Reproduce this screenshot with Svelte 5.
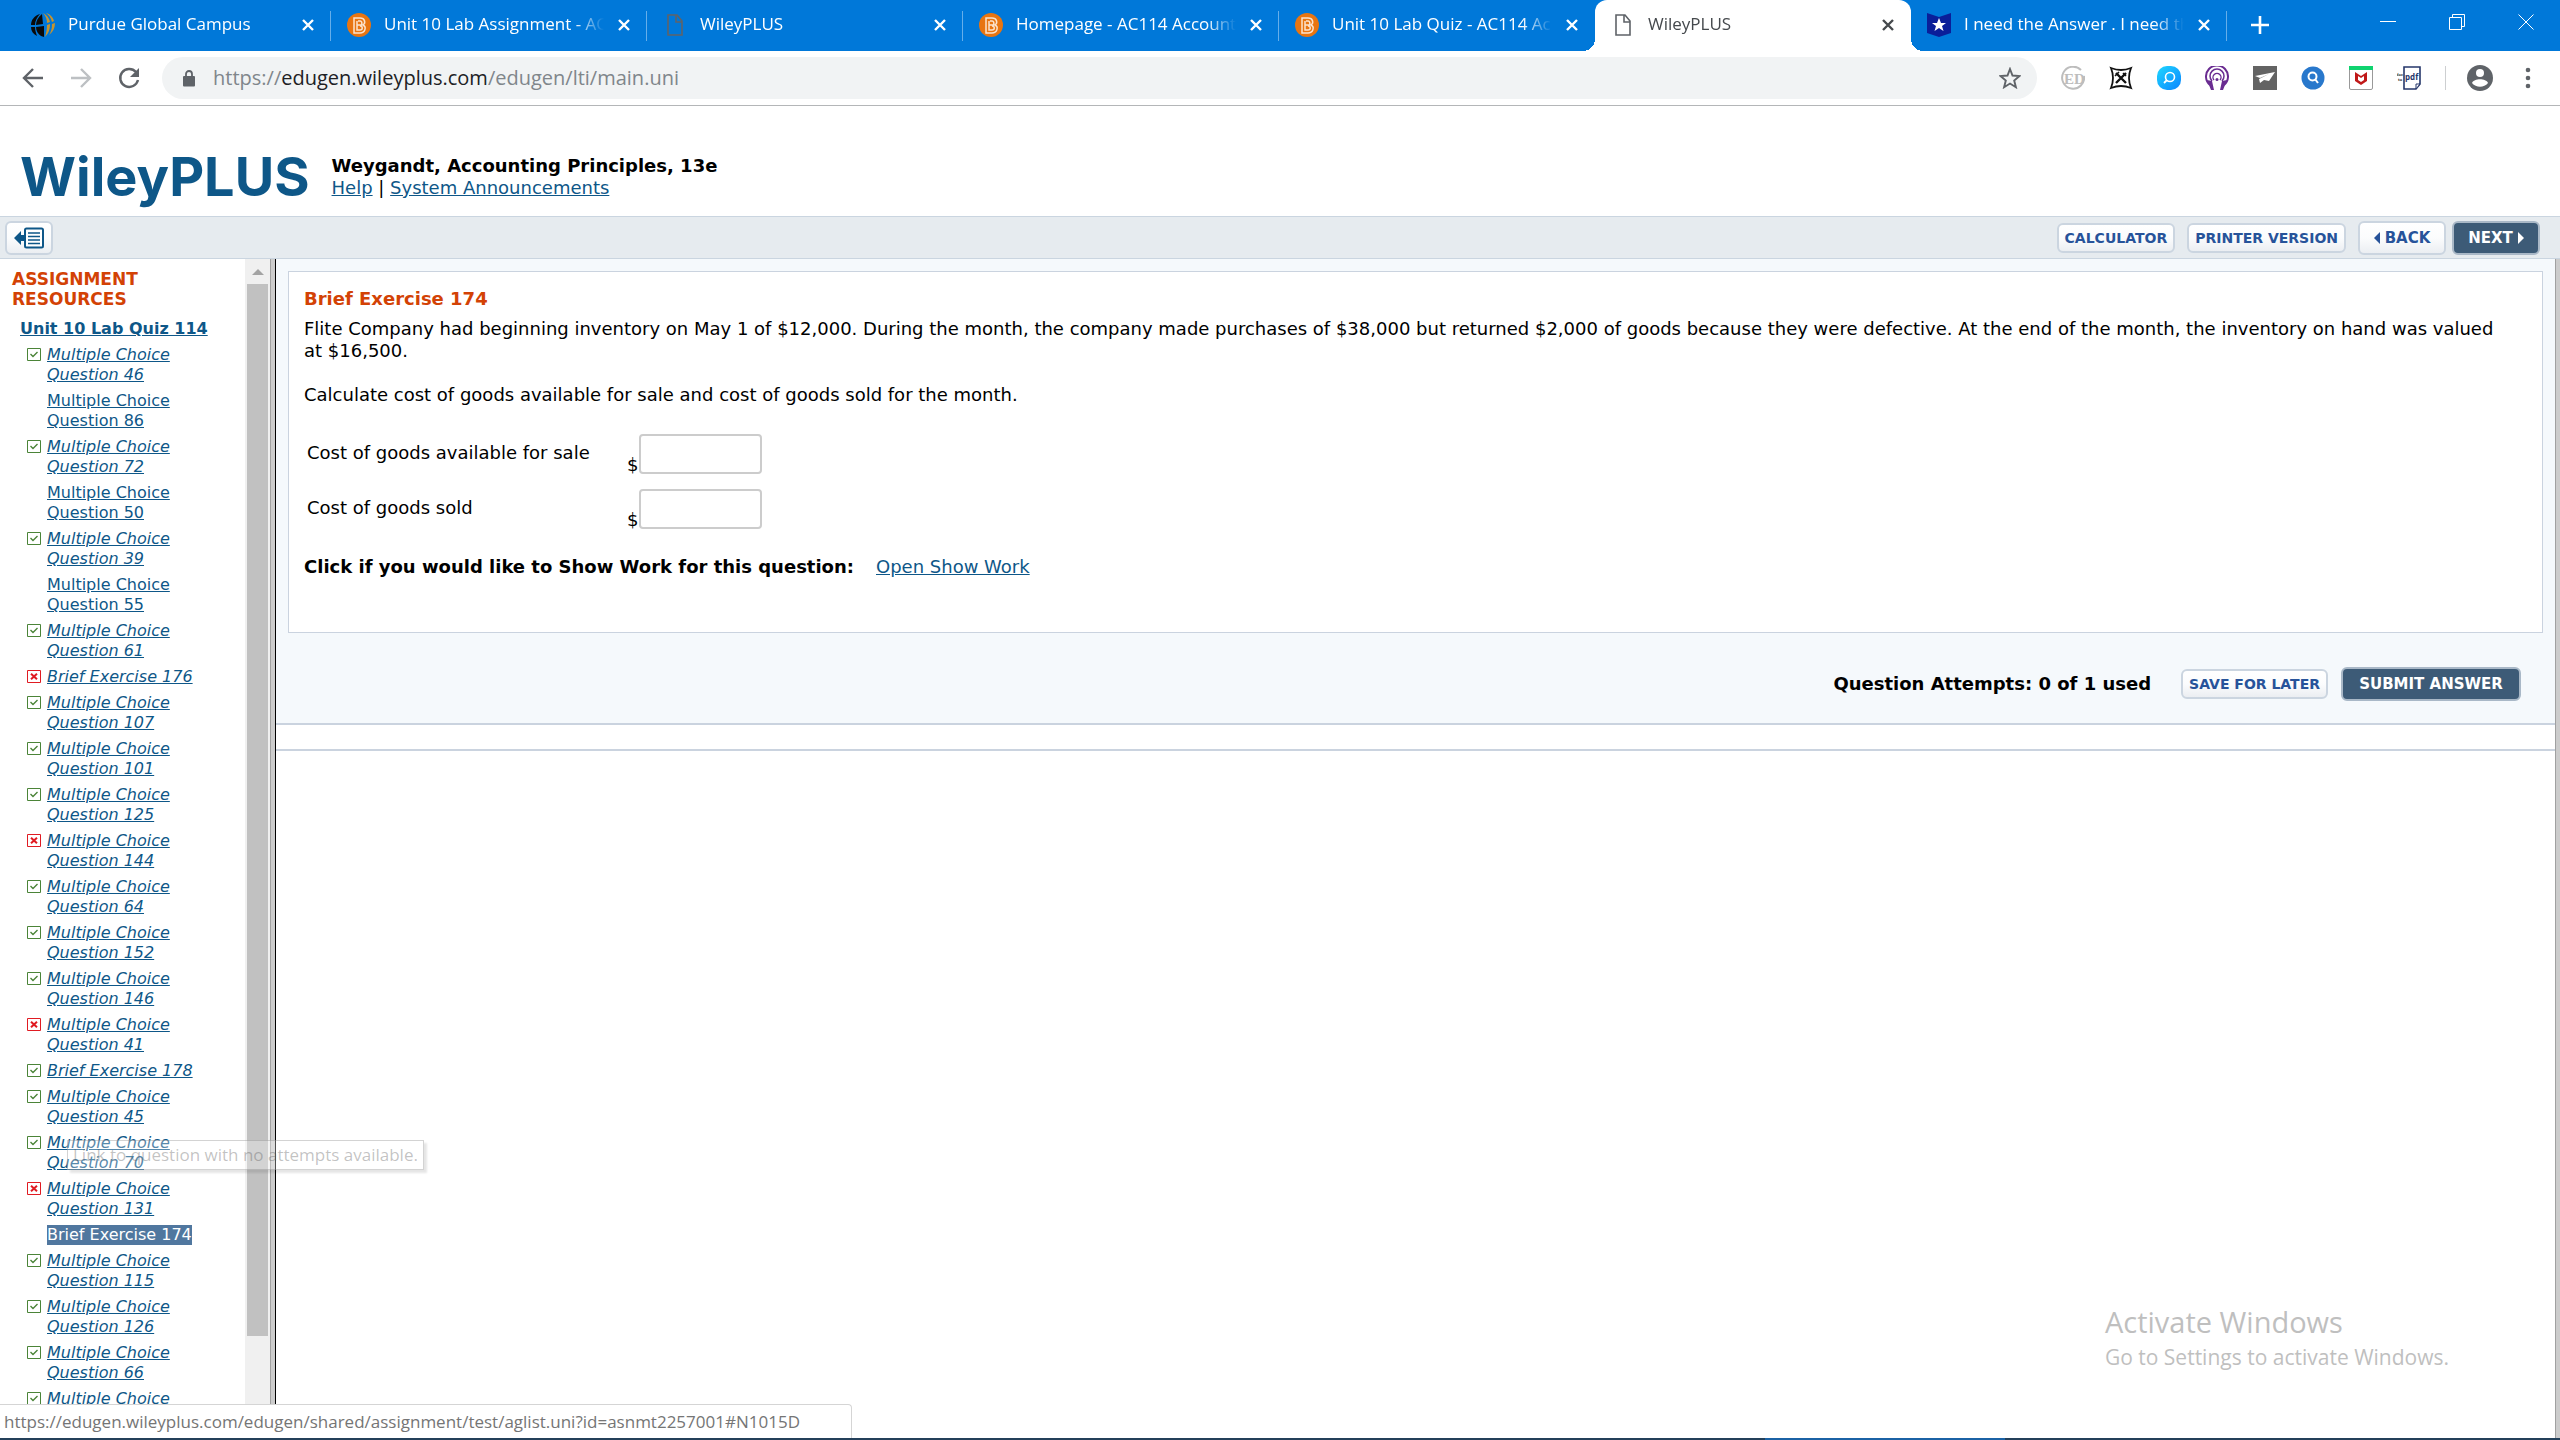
<script lang="ts">
	type Tab = { title: string; icon: string; active?: boolean };
	type Resource = { name: string; state: 'correct' | 'wrong' | 'open' | 'current' };

	const tabs: Tab[] = [
		{ title: 'Purdue Global Campus', icon: 'globe' },
		{ title: 'Unit 10 Lab Assignment - AC114', icon: 'bright' },
		{ title: 'WileyPLUS', icon: 'page' },
		{ title: 'Homepage - AC114 Accounting', icon: 'bright' },
		{ title: 'Unit 10 Lab Quiz - AC114 Acc', icon: 'bright' },
		{ title: 'WileyPLUS', icon: 'page', active: true },
		{ title: 'I need the Answer . I need the', icon: 'badge' }
	];

	const resources: Resource[] = [
		{ name: 'Multiple Choice Question 46', state: 'correct' },
		{ name: 'Multiple Choice Question 86', state: 'open' },
		{ name: 'Multiple Choice Question 72', state: 'correct' },
		{ name: 'Multiple Choice Question 50', state: 'open' },
		{ name: 'Multiple Choice Question 39', state: 'correct' },
		{ name: 'Multiple Choice Question 55', state: 'open' },
		{ name: 'Multiple Choice Question 61', state: 'correct' },
		{ name: 'Brief Exercise 176', state: 'wrong' },
		{ name: 'Multiple Choice Question 107', state: 'correct' },
		{ name: 'Multiple Choice Question 101', state: 'correct' },
		{ name: 'Multiple Choice Question 125', state: 'correct' },
		{ name: 'Multiple Choice Question 144', state: 'wrong' },
		{ name: 'Multiple Choice Question 64', state: 'correct' },
		{ name: 'Multiple Choice Question 152', state: 'correct' },
		{ name: 'Multiple Choice Question 146', state: 'correct' },
		{ name: 'Multiple Choice Question 41', state: 'wrong' },
		{ name: 'Brief Exercise 178', state: 'correct' },
		{ name: 'Multiple Choice Question 45', state: 'correct' },
		{ name: 'Multiple Choice Question 70', state: 'correct' },
		{ name: 'Multiple Choice Question 131', state: 'wrong' },
		{ name: 'Brief Exercise 174', state: 'current' },
		{ name: 'Multiple Choice Question 115', state: 'correct' },
		{ name: 'Multiple Choice Question 126', state: 'correct' },
		{ name: 'Multiple Choice Question 66', state: 'correct' },
		{ name: 'Multiple Choice', state: 'correct' }
	];

	let available = '';
	let sold = '';
</script>

<div class="window">
	<div class="tab-strip">
		{#each tabs as tab, i}
			<div class="tab" class:active={tab.active} class:divided={!tab.active && !tabs[i + 1]?.active}>
				<svg class="favicon" viewBox="0 0 24 24" aria-hidden="true">
					{#if tab.icon === 'globe'}
						<path d="M9 1C3 3 0 7 0 12h4C4 8 6 4 9 1zM11 1C7 4 5 8 5 12l7-1zM0 14c0 4 2 7 6 9-1-3-2-6-2-9zM5 14c0 4 2 7 5 9l3 1V13z" fill="#0a0a0a" />
						<path d="M12 0c3 3 4 7 4 10l3-1c-1-4-3-7-7-9zM15 0c3 2 5 5 6 9l2-1c-1-4-4-7-8-8zM16 12c0 5-1 8-2 12 3-3 5-7 5-13zM21 11c0 5-1 8-3 11 4-3 6-7 6-12z" fill="#c6942f" />
					{:else if tab.icon === 'bright'}
						<circle cx="12" cy="12" r="12" fill="#e87511" />
						<path d="M7 5h6c5 0 6 5 3 7 4 2 2 8-3 8H7zM10 8v9h3c3 0 3-4 0-4 3-1 2-5 0-5h-2M10 12h4" fill="none" stroke="#fbe3cd" stroke-width="1.5" />
					{:else if tab.icon === 'page'}
						<path d="M5 2h9l5 6v14H5zM13 2v7h6" fill="none" stroke="#5f6368" stroke-width="1.6" />
					{:else}
						<path d="M0 0l12 4L24 0v20l-12 4-12-4z" fill="#0a1e99" />
						<path d="M12 5l2 5h5l-4 3 1.500 5-4.500-3-4.500 3L9 13l-4-3h5z" fill="#fff" />
					{/if}
				</svg>
				<span class="tab-title">{tab.title}</span>
				<button class="tab-close" aria-label="Close tab">
					<svg viewBox="0 0 12 12"><path d="M1 1l10 10M11 1L1 11" stroke="currentColor" stroke-width="2.400" /></svg>
				</button>
			</div>
		{/each}
		<button class="new-tab" aria-label="New tab">
			<svg viewBox="0 0 18 18"><path d="M9 0v18M0 9h18" stroke="#fff" stroke-width="2.600" /></svg>
		</button>
		<div class="window-buttons">
			<button aria-label="Minimize"><svg viewBox="0 0 16 16"><path d="M0 7.500h16" /></svg></button>
			<button aria-label="Restore">
				<svg viewBox="0 0 16 16"><path d="M.5 3.500h12v12H.5zM3.500 3.500v-3h12v12h-3" /></svg>
			</button>
			<button aria-label="Close"><svg viewBox="0 0 16 16"><path d="M.5.5l15 15M15.500.5l-15 15" /></svg></button>
		</div>
	</div>

	<div class="toolbar">
		<button class="nav" aria-label="Back">
			<svg viewBox="0 0 24 24"><path d="M22 12H3M12 3l-9 9 9 9" /></svg>
		</button>
		<button class="nav faded" aria-label="Forward">
			<svg viewBox="0 0 24 24"><path d="M2 12h19M12 3l9 9-9 9" /></svg>
		</button>
		<button class="nav" aria-label="Reload">
			<svg viewBox="0 0 24 24"><path d="M19 6a9 9 0 1 0 2 8" /><path d="M22 2v9h-9z" fill="currentColor" stroke="none" /></svg>
		</button>
		<div class="address">
			<svg class="lock" viewBox="0 0 12 17" aria-hidden="true">
				<rect x="0" y="6" width="12" height="10.500" rx="1" fill="#5f6368" />
				<path d="M3 7V4a3 3 0 0 1 6 0v3" fill="none" stroke="#5f6368" stroke-width="1.800" />
			</svg>
			<span class="url">https://<b>edugen.wileyplus.com</b>/edugen/lti/main.uni</span>
			<button class="star" aria-label="Bookmark this page">
				<svg viewBox="0 0 22 22"><path d="M11 2l2.500 6.500 7 .5-5.300 4.500 1.700 6.700L11 16.500l-5.900 3.700 1.700-6.700L1.500 9l7-.5z" fill="none" stroke="#5f6368" stroke-width="1.900" /></svg>
			</button>
		</div>
		<div class="extensions">
			<svg viewBox="0 0 24 24">
				<path d="M20 4A11 11 0 1 0 23 10" fill="none" stroke="#bdbdbd" stroke-width="2" />
				<text x="3" y="18" font-family="Liberation Serif" font-size="15" font-weight="700" fill="#bdbdbd">ED</text>
			</svg>
			<svg viewBox="0 0 24 24">
				<path d="M2 2q10 4 20 0-4 10 0 20-10-4-20 0Q6 12 2 2z" fill="none" stroke="#111" stroke-width="1.800" />
				<path d="M7 7l10 10M17 7L7 17" stroke="#111" stroke-width="2.400" />
				<path d="M6 10l4-4M14 7l3 3" stroke="#111" stroke-width="1.600" />
			</svg>
			<svg viewBox="0 0 24 24">
				<defs><linearGradient id="aqua" x1="0" y1="0" x2="1" y2="1"><stop offset="0" stop-color="#1fd7ff" /><stop offset="1" stop-color="#0a84ff" /></linearGradient></defs>
				<rect width="24" height="24" rx="10" fill="url(#aqua)" />
				<circle cx="13" cy="11" r="4.500" fill="none" stroke="#fff" stroke-width="1.600" />
				<path d="M10 14l-3 3" stroke="#fff" stroke-width="1.800" />
			</svg>
			<svg viewBox="0 0 24 24">
				<g fill="none" stroke="#6a2c91" stroke-width="2">
					<path d="M5 19a11 11 0 1 1 14 0" /><path d="M7 15a7 7 0 1 1 10 0" stroke-width="1.500" /><path d="M9 14a4 4 0 1 1 6 0" stroke-width="1.400" />
				</g>
				<path d="M2 14l5 1 2 9H6zM22 14l-5 1-2 9h3z" fill="#6a2c91" /><circle cx="12" cy="13.500" r="1.500" fill="#6a2c91" />
			</svg>
			<svg viewBox="0 0 24 24">
				<rect width="24" height="24" fill="#636363" />
				<path d="M2 10l20-4-6 9-5-1-4 3-1-4 10-5-9 4z" fill="#fff" />
			</svg>
			<svg viewBox="0 0 24 24">
				<circle cx="12" cy="12" r="11.500" fill="#2878cc" />
				<circle cx="11.500" cy="10.500" r="4" fill="none" stroke="#fff" stroke-width="2" /><path d="M14 13l3 4" stroke="#fff" stroke-width="2" />
			</svg>
			<svg viewBox="0 0 24 24">
				<rect x=".5" y=".5" width="23" height="23" rx="1.500" fill="#fff" stroke="#999" /><path d="M0 0h24v4H0z" fill="#0fd36f" />
				<path d="M6 6l6 4 6-4v9l-6 4-6-4zm3 4v4l3 2 3-2v-4l-3 2z" fill="#c01818" />
			</svg>
			<svg viewBox="0 0 24 24">
				<path d="M7 1h16v17l-4 5H7z" fill="none" stroke="#26376b" stroke-width="1.600" /><path d="M19 23v-5h4z" fill="#fff" stroke="#26376b" />
				<text x="8" y="14" font-family="Open Sans" font-weight="700" font-size="8" fill="#26376b">pdf</text>
				<text x="-1" y="10" font-family="Open Sans" font-weight="700" font-size="4" fill="#333">doc</text>
				<text x="1" y="15" font-family="Open Sans" font-weight="700" font-size="4" fill="#333">to</text>
			</svg>
		</div>
		<div class="profile">
			<svg viewBox="0 0 26 26"><circle cx="13" cy="13" r="13" fill="#5f6368" /><circle cx="13" cy="8" r="4" fill="#fff" /><path d="M5 18c2-5 14-5 16 0-4 5-12 5-16 0z" fill="#fff" /></svg>
			<svg viewBox="0 0 26 26"><g fill="#5f6368"><circle cx="13" cy="5" r="2.300" /><circle cx="13" cy="13" r="2.300" /><circle cx="13" cy="21" r="2.300" /></g></svg>
		</div>
	</div>

	<header class="masthead">
		<div class="logo">WileyPLUS</div>
		<div class="book">
			<strong>Weygandt, Accounting Principles, 13e</strong>
			<div><a href="#help">Help</a> | <a href="#announcements">System Announcements</a></div>
		</div>
	</header>

	<div class="actions">
		<button class="btn collapse" aria-label="Hide resources">
			<svg viewBox="0 0 32 22">
				<path d="M1 11l7-7v4h5v6H8v4z" fill="#0e5788" />
				<rect x="12" y="1.500" width="18" height="19" rx="1.500" fill="#fff" stroke="#0e5788" stroke-width="2" />
				<path d="M15 6h12M15 9.500h12M15 13h12M15 16.500h12" stroke="#0e5788" stroke-width="1.600" />
			</svg>
		</button>
		<button class="btn small">CALCULATOR</button>
		<button class="btn small">PRINTER VERSION</button>
		<button class="btn step">
			<svg viewBox="0 0 6 12"><path d="M6 0v12L0 6z" fill="currentColor" /></svg>BACK
		</button>
		<button class="btn primary">
			NEXT<svg viewBox="0 0 6 12"><path d="M0 0v12l6-6z" fill="currentColor" /></svg>
		</button>
	</div>

	<div class="frames">
		<nav class="sidebar">
			<div class="resources">
				<h2>ASSIGNMENT RESOURCES</h2>
				<a class="quiz" href="#quiz">Unit 10 Lab Quiz 114</a>
				<ul>
					{#each resources as item}
						<li class={item.state}>
							<svg class="mark" viewBox="0 0 14 13" aria-hidden="true">
								{#if item.state === 'correct'}
									<path d="M.5.5h13v12H.5z" fill="#fff" stroke="#4b8438" />
									<path d="M3.500 6l2.500 2.500L10.500 4" fill="none" stroke="#4b8438" stroke-width="1.400" />
								{:else if item.state === 'wrong'}
									<path d="M.5.5h13v12H.5z" fill="#fff" stroke="#e01b22" />
									<path d="M4 3.800l6 5.400M10 3.800L4 9.200" stroke="#e01b22" stroke-width="2" />
								{/if}
							</svg>
							<a href="#question">{item.name}</a>
						</li>
					{/each}
				</ul>
			</div>
			<div class="scrollbar">
				<svg viewBox="0 0 12 6" aria-hidden="true"><path d="M0 6l6-6 6 6z" fill="#a3a3a3" /></svg>
				<div class="thumb"></div>
			</div>
		</nav>

		<main>
			<section class="question">
				<div class="card">
					<h1>Brief Exercise 174</h1>
					<p>
						Flite Company had beginning inventory on May 1 of $12,000. During the month, the company made purchases of
						$38,000 but returned $2,000 of goods because they were defective. At the end of the month, the inventory on
						hand was valued at $16,500.
					</p>
					<p class="task">Calculate cost of goods available for sale and cost of goods sold for the month.</p>
					<div class="field">
						<label for="available">Cost of goods available for sale</label>
						<span class="currency">$</span>
						<input id="available" type="text" bind:value={available} />
					</div>
					<div class="field">
						<label for="sold">Cost of goods sold</label>
						<span class="currency">$</span>
						<input id="sold" type="text" bind:value={sold} />
					</div>
					<div class="show-work">
						<strong>Click if you would like to Show Work for this question:</strong>
						<a href="#show-work">Open Show Work</a>
					</div>
				</div>
				<div class="submit-row">
					<strong>Question Attempts: 0 of 1 used</strong>
					<button class="btn small">SAVE FOR LATER</button>
					<button class="btn primary submit">SUBMIT ANSWER</button>
				</div>
			</section>
			<div class="rule"></div>
		</main>
		<div class="tooltip" role="tooltip">Link to question with no attempts available.</div>
		<div class="watermark">
			<div class="watermark-title">Activate Windows</div>
			<div>Go to Settings to activate Windows.</div>
		</div>
		<div class="status">https://edugen.wileyplus.com/edugen/shared/assignment/test/aglist.uni?id=asnmt2257001#N1015D</div>
	</div>
	<div class="taskbar"><span></span></div>
</div>

<style>
	:global(body) {
		margin: 0;
		background: #fff;
	}

	.window {
		display: flex;
		flex-direction: column;
		height: 100vh;
		overflow: hidden;
		font-family: 'DejaVu Sans', Verdana, sans-serif;
		font-size: 18px;
		line-height: 22px;
		color: #000;
	}

	button {
		display: flex;
		align-items: center;
		justify-content: center;
		flex: none;
		padding: 0;
		border: none;
		background: none;
		font-family: inherit;
		cursor: pointer;
	}

	svg {
		display: block;
		flex: none;
	}

	a {
		color: #0e5788;
	}

	/* browser chrome */
	.tab-strip {
		display: flex;
		flex: none;
		height: 51px;
		padding-left: 15px;
		background: #0078d9;
		font-family: 'Open Sans', 'Segoe UI', sans-serif;
		font-size: 17px;
	}

	.tab {
		position: relative;
		display: flex;
		align-items: center;
		box-sizing: border-box;
		flex: 0 1 316px;
		min-width: 0;
		padding: 0 17px 1px 16px;
		color: #fff;
	}

	.tab.divided::after {
		content: '';
		position: absolute;
		right: 0;
		top: 11px;
		width: 1px;
		height: 30px;
		background: #66aeea;
	}

	.tab.active {
		background: #fff;
		border-radius: 12px 12px 0 0;
		color: #45494d;
	}

	.tab.active::before,
	.tab.active::after {
		content: '';
		position: absolute;
		bottom: 0;
		width: 12px;
		height: 12px;
	}

	.tab.active::before {
		right: 100%;
		background: radial-gradient(circle at 0 0, transparent 12px, #fff 12px);
	}

	.tab.active::after {
		left: 100%;
		background: radial-gradient(circle at 100% 0, transparent 12px, #fff 12px);
	}

	.favicon {
		width: 24px;
		height: 24px;
		margin-right: 13px;
	}

	.tab-title {
		flex: 1;
		overflow: hidden;
		line-height: 24px;
		padding-bottom: 2px;
		white-space: nowrap;
		mask-image: linear-gradient(to right, #000 calc(100% - 30px), transparent);
	}

	.tab-close {
		margin-left: 14px;
		color: inherit;
	}

	.tab-close svg {
		width: 12px;
		height: 12px;
	}

	.new-tab {
		width: 66px;
		height: 50px;
	}

	.new-tab svg {
		width: 18px;
		height: 18px;
	}

	.window-buttons {
		display: flex;
		height: 44px;
		margin-left: auto;
	}

	.window-buttons button {
		width: 69px;
	}

	.window-buttons svg {
		width: 16px;
		height: 16px;
		fill: none;
		stroke: #fff;
	}

	.toolbar {
		display: flex;
		align-items: center;
		flex: none;
		height: 54px;
		padding: 0 19px 0 9px;
		border-bottom: 1px solid #b4b6b8;
	}

	.nav {
		width: 48px;
		color: #5f6368;
	}

	.nav.faded {
		color: #bdc0c3;
	}

	.nav svg {
		width: 24px;
		height: 24px;
		fill: none;
		stroke: currentColor;
		stroke-width: 2.4;
	}

	.address {
		display: flex;
		align-items: center;
		flex: 1;
		box-sizing: border-box;
		height: 42px;
		margin: 0 24px 0 9px;
		padding: 0 16px 0 21px;
		border-radius: 21px;
		background: #f1f3f4;
		font-family: 'Open Sans', 'Segoe UI', sans-serif;
		font-size: 20px;
	}

	.lock {
		width: 12px;
		height: 17px;
		margin-right: 18px;
	}

	.url {
		flex: 1;
		color: #80868b;
	}

	.url b {
		font-weight: 400;
		color: #202124;
	}

	.star svg {
		width: 22px;
		height: 22px;
	}

	.extensions {
		display: flex;
		gap: 24px;
	}

	.extensions svg {
		width: 24px;
		height: 24px;
	}

	.profile {
		display: flex;
		align-items: center;
		gap: 22px;
		height: 24px;
		margin-left: 24px;
		padding-left: 21px;
		border-left: 1px solid #cdcfd1;
	}

	.profile svg {
		width: 26px;
		height: 26px;
	}

	/* WileyPLUS page */
	.masthead {
		display: flex;
		align-items: flex-start;
		flex: none;
		box-sizing: border-box;
		height: 110px;
		padding: 40px 20px 0;
	}

	.logo {
		margin-right: 22px;
		font-family: Inter, sans-serif;
		font-size: 54px;
		font-weight: 700;
		line-height: 62px;
		color: #0e5788;
	}

	.book {
		padding-top: 9px;
	}

	.actions {
		display: flex;
		align-items: center;
		flex: none;
		gap: 12px;
		height: 41px;
		padding: 0 20px 0 5px;
		border-top: 1px solid #cad5e0;
		border-bottom: 1px solid #cad5e0;
		background: #e6ebef;
	}

	.btn {
		box-sizing: border-box;
		height: 34px;
		border: 2px solid #cbd5e0;
		border-radius: 6px;
		background: linear-gradient(#fff, #fbfcfd 50%, #ebeef2);
		font-size: 15px;
		font-weight: 700;
		color: #27539a;
	}

	.btn.small {
		height: 30px;
		padding: 0 6px;
		font-size: 14px;
	}

	.btn.collapse {
		width: 48px;
		margin-right: auto;
	}

	.collapse svg {
		width: 32px;
		height: 22px;
	}

	.btn.step,
	.btn.primary {
		gap: 5px;
		width: 88px;
	}

	.btn.primary {
		margin-left: -6px;
		border-color: #a9b8c7;
		background: #3d5b77;
		color: #fff;
	}

	.step svg,
	.primary svg {
		width: 6px;
		height: 12px;
	}

	.frames {
		position: relative;
		display: flex;
		flex: 1;
		min-height: 0;
	}

	.sidebar {
		display: flex;
		flex: none;
		box-sizing: border-box;
		width: 276px;
		border-right: 1px solid #000;
		background: #ccc;
		overflow: hidden;
	}

	.resources {
		flex: 1;
		padding: 10px 0 0 12px;
		background: #fff;
		font-size: 16px;
		line-height: 20px;
	}

	.resources h2 {
		margin: 0 0 10px;
		color: #d34205;
		font-size: 17px;
	}

	.quiz {
		margin-left: 8px;
		font-weight: 700;
	}

	.resources ul {
		display: flex;
		flex-direction: column;
		gap: 6px;
		margin: 6px 0 0;
		padding: 0 0 0 15px;
		list-style: none;
	}

	.resources li {
		display: flex;
		gap: 6px;
	}

	.correct,
	.wrong {
		font-style: italic;
	}

	.current a {
		background: #50779f;
		color: #fff;
		text-decoration: none;
	}

	.mark {
		width: 14px;
		height: 13px;
		margin-top: 3px;
	}

	.scrollbar {
		display: flex;
		flex-direction: column;
		align-items: center;
		box-sizing: border-box;
		width: 26px;
		margin-right: 4px;
		padding-top: 10px;
		border-right: 1px solid #a0a0a0;
		background: #f0f0f0;
	}

	.scrollbar svg {
		width: 12px;
		height: 6px;
		margin-bottom: 9px;
	}

	.thumb {
		width: 21px;
		height: 90%;
		background: #c1c1c1;
	}

	main {
		flex: 1;
		min-width: 0;
		border-right: 1px solid #a0a0a0;
		box-shadow: 4px 0 #ccc;
		margin-right: 4px;
	}

	.question {
		padding: 12px;
		border-bottom: 2px solid #cad3df;
		background: #f5f9fc;
	}

	.card {
		padding: 16px 32px 54px 15px;
		border: 1px solid #cad3df;
		background: #fff;
	}

	.card h1 {
		margin: 0 0 8px;
		font-size: 18px;
		line-height: 22px;
		color: #d34205;
	}

	.card p {
		margin: 0 0 22px;
	}

	.card .task {
		margin-bottom: 28px;
	}

	.field {
		display: flex;
		align-items: flex-end;
		margin: 0 0 15px 3px;
	}

	.field label {
		align-self: center;
		width: 320px;
		padding-bottom: 2px;
	}

	.currency {
		width: 12px;
		line-height: 18px;
	}

	.field input {
		box-sizing: border-box;
		width: 123px;
		height: 40px;
		padding: 0 6px;
		border: 2px solid #ccc;
		border-radius: 4px;
		font: inherit;
	}

	.show-work {
		display: flex;
		gap: 22px;
		padding-top: 12px;
	}

	.submit-row {
		display: flex;
		align-items: center;
		justify-content: flex-end;
		padding: 34px 22px 10px 0;
	}

	.submit-row .small {
		margin-left: 30px;
	}

	.btn.submit {
		width: 180px;
		margin-left: 13px;
	}

	.rule {
		height: 24px;
		border-bottom: 2px solid #cad3df;
	}

	/* things floating above the frames */
	.tooltip {
		position: absolute;
		left: 67px;
		top: 881px;
		padding: 3px 5px;
		border: 1px solid rgba(110, 110, 110, 0.3);
		background: rgba(255, 255, 255, 0.3);
		box-shadow: 3px 3px 2px rgba(0, 0, 0, 0.1);
		font-family: 'Open Sans', 'Segoe UI', sans-serif;
		font-size: 17px;
		color: rgba(80, 80, 80, 0.35);
		white-space: nowrap;
	}

	.watermark {
		position: absolute;
		right: 111px;
		bottom: 65px;
		font-family: 'Open Sans', 'Segoe UI', sans-serif;
		font-size: 21px;
		line-height: 32px;
		color: #bfbfbf;
	}

	.watermark-title {
		font-size: 29px;
		line-height: 38px;
	}

	.status {
		position: absolute;
		left: 0;
		bottom: 0;
		box-sizing: border-box;
		width: 852px;
		height: 34px;
		padding-left: 4px;
		border: solid #d5d5d5;
		border-width: 1px 1px 0 0;
		border-top-right-radius: 4px;
		background: #fff;
		font-family: 'Open Sans', 'Segoe UI', sans-serif;
		font-size: 17px;
		line-height: 34px;
		color: #757575;
	}

	.taskbar {
		display: flex;
		flex: none;
		height: 2px;
		padding-right: 555px;
		background: #24405a;
	}

	.taskbar span {
		width: 240px;
		margin-left: auto;
		background: #1b62a5;
	}
</style>
